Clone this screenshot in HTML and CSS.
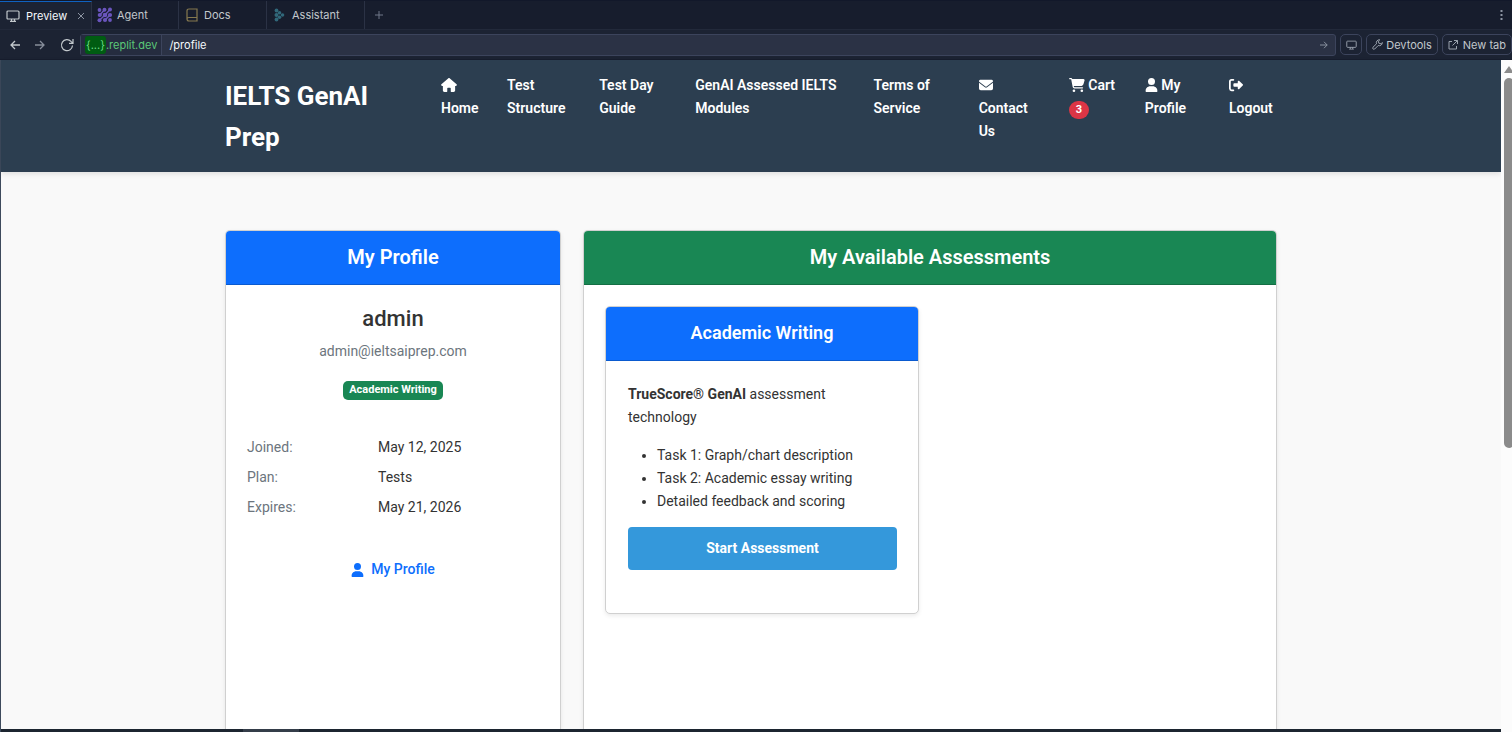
FILE: index.html
```html
<!DOCTYPE html>
<html lang="en">
<head>
<meta charset="utf-8">
<title>IELTS GenAI Prep - My Profile</title>
<link rel="stylesheet" href="styles.css">
</head>
<body>
<svg class="sprite" aria-hidden="true">
  <symbol id="monitor" viewBox="0 0 14 12"><path d="M2 1h10q1 0 1 1v6q0 1-1 1H2Q1 9 1 8V2q0-1 1-1zM5.500 9v2M8.500 9v2M4 11.400h6" fill="none" stroke="currentColor" stroke-width="1.200"/></symbol>
  <symbol id="user" viewBox="0 0 448 512"><path d="M224 256a128 128 0 1 0 0-256 128 128 0 1 0 0 256zm-46 48C80 304 0 384 0 482c0 17 13 30 30 30h388c17 0 30-13 30-30 0-98-80-178-178-178z" fill="currentColor"/></symbol>
</svg>

<div class="tabbar">
  <nav class="tabs" aria-label="Workspace tabs">
    <div class="tab tab-active">
      <svg class="tab-icon" viewBox="0 0 14 12"><use href="#monitor"/></svg>
      <span>Preview</span>
      <button class="plain tab-close" aria-label="Close tab"><svg width="8" height="8" viewBox="0 0 8 8"><path d="M1 1l6 6M7 1L1 7" stroke="currentColor"/></svg></button>
    </div>
    <a class="tab tab-agent" href="#">
      <svg width="16" height="16" viewBox="0 0 16 16" fill="#6a55bd"><circle cx="2.500" cy="3" r="1.900"/><circle cx="7.500" cy="2.800" r="2"/><circle cx="13" cy="2.500" r="2"/><circle cx="2.800" cy="8" r="2.100"/><circle cx="8" cy="8" r="2.300"/><circle cx="13" cy="8" r="2.100"/><circle cx="2.500" cy="13.300" r="2"/><circle cx="8" cy="13" r="2.100"/><circle cx="13" cy="13" r="1.900"/><path d="M2.800 8L7.500 2.800M8 8l5-5.500M2.500 13.300L8 8M8 13l5-5" stroke="#6a55bd" stroke-width="1.500"/></svg>
      <span>Agent</span>
    </a>
    <a class="tab tab-docs" href="#">
      <svg width="12" height="14" viewBox="0 0 12 14" fill="none" stroke="#85794f" stroke-width="1.200"><path d="M3 1h8v12H3q-2 0-2-2V3q0-2 2-2zM1 11q0-1.500 2-1.500h8"/></svg>
      <span>Docs</span>
    </a>
    <a class="tab tab-assistant" href="#">
      <svg width="11" height="14" viewBox="0 0 11 14" fill="#31687a"><circle cx="2.500" cy="2.500" r="1.900"/><circle cx="2.500" cy="7" r="2"/><circle cx="2.500" cy="11.500" r="1.900"/><circle cx="5.500" cy="4.700" r="1.800"/><circle cx="5.500" cy="9.300" r="1.800"/><circle cx="8.500" cy="7" r="1.800"/></svg>
      <span>Assistant</span>
    </a>
  </nav>
  <button class="plain tab-add" aria-label="New tab"><svg width="8" height="8" viewBox="0 0 8 8"><path d="M4 0v8M0 4h8" stroke="currentColor"/></svg></button>
  <button class="plain tab-more" aria-label="More options"><svg width="3" height="12" viewBox="0 0 3 12" fill="currentColor"><path d="M.5 1h2v2h-2zM.5 5h2v2h-2zM.5 9h2v2h-2z"/></svg></button>
</div>

<div class="toolbar">
  <div class="history">
    <button class="plain" aria-label="Back"><svg width="10" height="10" viewBox="0 0 10 10" fill="none" stroke="currentColor" stroke-width="1.300"><path d="M10 5H1M5 1L1 5l4 4"/></svg></button>
    <button class="plain dim" aria-label="Forward"><svg width="10" height="10" viewBox="0 0 10 10" fill="none" stroke="currentColor" stroke-width="1.300"><path d="M0 5h9M5 1l4 4-4 4"/></svg></button>
    <button class="plain" aria-label="Reload"><svg width="14" height="14" viewBox="0 0 14 14" fill="none" stroke="currentColor" stroke-width="1.200"><path d="M12.500 7.500A5.500 5.500 0 1 1 11 3.300L13 5.300M13 1v4.300H9"/></svg></button>
  </div>
  <form class="address">
    <span class="host"><span class="host-id">{...}</span>.replit.dev</span>
    <input class="path" type="text" value="/profile" aria-label="Path">
    <button class="plain go" type="button" aria-label="Go"><svg width="8" height="8" viewBox="0 0 10 10" fill="none" stroke="currentColor" stroke-width="1.200"><path d="M0 5h9M5 1l4 4-4 4"/></svg></button>
  </form>
  <button class="tool tool-square" aria-label="Device size"><svg width="11" height="10" viewBox="0 0 14 12"><use href="#monitor"/></svg></button>
  <button class="tool"><svg width="11" height="11" viewBox="0 0 11 11" fill="none" stroke="currentColor"><path d="M6.800 4.200L9 4.800l1.300-1.300A3 3 0 0 1 6.200 6.500L2.700 10Q1.800 10.600 1 9.900T1 8.200L4.500 4.800A3 3 0 0 1 7.800.8L6.400 2.200z"/></svg>Devtools</button>
  <button class="tool tool-last"><svg width="10" height="10" viewBox="0 0 10 10" fill="none" stroke="currentColor"><path d="M4 1.500H1v7.500h7.500V6M6 .5h3.500V4M9.500.5L4.500 5.500"/></svg>New tab</button>
</div>

<div class="viewport">
  <div class="page">
    <header class="site-header">
      <div class="container header-row">
        <a class="brand" href="#">IELTS GenAI Prep</a>
        <nav class="site-nav" aria-label="Main">
          <a href="#"><svg class="icon-wide" viewBox="0 0 576 512" fill="currentColor"><path d="M576 256c0 18-15 32-32 32h-32v170c0 30-24 54-54 54h-90c-9 0-16-7-16-16V376c0-13-11-24-24-24h-80c-13 0-24 11-24 24v120c0 9-7 16-16 16h-90c-30 0-54-24-54-54V288H32c-18 0-32-14-32-32 0-9 3-17 10-24L266 8c14-12 31-12 44 0l255 224c7 7 11 15 11 24z"/></svg> Home</a>
          <a href="#">Test Structure</a>
          <a href="#">Test Day Guide</a>
          <a href="#">GenAI Assessed IELTS Modules</a>
          <a href="#">Terms of Service</a>
          <a href="#"><svg class="icon" viewBox="0 0 512 512" fill="currentColor"><path d="M48 64a48 48 0 0 0-29 86l218 164q19 14 38 0l218-164a48 48 0 0 0-29-86zM0 176v208q0 64 64 64h384q64 0 64-64V176L294 339q-38 28-76 0z"/></svg> Contact Us</a>
          <a href="#"><svg class="icon-wide" viewBox="0 0 576 512" fill="currentColor"><path d="M0 24Q0 0 24 0h46q32 0 46 32h411q43 5 39 46l-43 152q-15 52-68 58H171l6 32q3 16 22 16h289q24 0 24 24t-24 24H199q-60-3-70-55L77 57q-1-9-8-9H24Q0 48 0 24z"/><circle cx="176" cy="464" r="48"/><circle cx="464" cy="464" r="48"/></svg> Cart <span class="count">3</span></a>
          <a href="#"><svg class="icon-user" viewBox="0 0 448 512"><use href="#user"/></svg> My Profile</a>
          <a href="#"><svg class="icon" viewBox="0 0 512 512" fill="currentColor"><path d="M160 96q32 0 32-32t-32-32H96Q0 38 0 128v256q6 90 96 96h64q32 0 32-32t-32-32H96q-32 0-32-32V128q0-32 32-32zM502 278q20-22 0-45L366 105q-34-20-46 23v64H192q-32 3-32 32v64q3 29 32 32h128v64q12 43 46 23z"/></svg> Logout</a>
        </nav>
      </div>
    </header>

    <main class="container columns">
      <section class="card">
        <h2 class="card-header blue">My Profile</h2>
        <div class="card-body profile">
          <h3 class="username">admin</h3>
          <p class="email">admin@ieltsaiprep.com</p>
          <span class="badge">Academic Writing</span>
          <dl class="facts">
            <dt>Joined:</dt><dd>May 12, 2025</dd>
            <dt>Plan:</dt><dd>Tests</dd>
            <dt>Expires:</dt><dd>May 21, 2026</dd>
          </dl>
          <a class="profile-link" href="#"><svg class="icon-user" viewBox="0 0 448 512"><use href="#user"/></svg>My Profile</a>
        </div>
      </section>

      <section class="card">
        <h2 class="card-header green">My Available Assessments</h2>
        <div class="card-body assessments">
          <article class="card">
            <h3 class="card-header card-header-small blue">Academic Writing</h3>
            <div class="card-body assessment">
              <p><strong>TrueScore® GenAI</strong> assessment technology</p>
              <ul>
                <li>Task 1: Graph/chart description</li>
                <li>Task 2: Academic essay writing</li>
                <li>Detailed feedback and scoring</li>
              </ul>
              <button class="start">Start Assessment</button>
            </div>
          </article>
        </div>
      </section>
    </main>
    <div class="bottom-strip"><div class="bottom-handle"></div></div>
  </div>
  <div class="scrollbar" aria-hidden="true">
    <div class="scroll-arrow"></div>
    <div class="scroll-thumb"></div>
  </div>
</div>
</body>
</html>
```
FILE: styles.css
```css
* { box-sizing: border-box; }

body {
  margin: 0;
  height: 100vh;
  display: flex;
  flex-direction: column;
  overflow: hidden;
  background: #1c2333;
  color: #333;
  font: 14px/23px Roboto, "Liberation Sans", sans-serif;
}

h2, h3, p, ul, dl, dd { margin: 0; }
a { color: inherit; text-decoration: none; }
svg { display: block; flex: none; }
.sprite { display: none; }

.plain {
  display: flex;
  align-items: center;
  justify-content: center;
  padding: 0;
  border: 0;
  background: none;
  color: inherit;
}

/* Workspace chrome */
.tabbar, .toolbar {
  display: flex;
  flex: none;
  align-items: center;
  color: #c2c8cc;
  font: 11px/16px Inter, sans-serif;
}

.tabbar {
  height: 30px;
  background: #171d2d;
  border-top: 1px solid #12182a;
  border-bottom: 1px solid #22293a;
}

.tabs { display: flex; align-self: stretch; }

.tab {
  display: flex;
  align-items: center;
  gap: 6px;
  padding: 0 6px;
  border-right: 1px solid #2b3245;
}

.tab-active {
  width: 92px;
  background: #1c2333;
  border-top: 1px solid #0f62c0;
  color: #f5f9fc;
}

.tab-icon { width: 14px; height: 12px; color: #c2c8cc; }
.tab-close { margin-left: auto; color: #8d95a3; }
.tab-agent { width: 87px; padding-left: 5px; gap: 4px; }
.tab-docs { width: 88px; padding-left: 7px; }
.tab-assistant { width: 98px; padding-left: 7px; gap: 7px; }
.tab-add { width: 28px; height: 28px; color: #71798a; }
.tab-more { width: 22px; height: 28px; margin-left: auto; color: #8d95a3; }

.toolbar { height: 30px; gap: 4px; border-bottom: 1px solid #171d2d; }
.history { display: flex; align-items: center; gap: 15px; width: 76px; padding-left: 10px; }
.history .dim { color: #878e9b; }

.address {
  display: flex;
  flex: 1;
  height: 22px;
  background: #2b3245;
  border: 1px solid #3c445c;
  border-radius: 3px;
}

.host {
  padding: 2px 4px 0 4px;
  background: #252c3f;
  border-right: 1px solid #3c445c;
  color: #5bc878;
}

.host-id { padding: 2px 1px; border-radius: 3px; background: #005c12; color: #6ad987; }

.path {
  flex: 1;
  min-width: 0;
  padding: 0 7px;
  border: 0;
  background: none;
  color: #f5f9fc;
  font: inherit;
}

.go { width: 22px; color: #8d95a3; }

.tool {
  display: flex;
  align-items: center;
  justify-content: center;
  gap: 3px;
  height: 21px;
  padding: 0 5px;
  border: 1px solid #3c445c;
  border-radius: 5px;
  background: #1c2333;
  color: #c2c8cc;
  font: inherit;
}

.tool-square { width: 22px; padding: 0; }
.tool svg { color: #9ba3ae; }
.tool-last { gap: 5px; }

/* Previewed page */
.viewport { display: flex; flex: 1; min-height: 0; border-left: 1px solid #3d4a5c; }

.page {
  display: flex;
  flex: 1;
  flex-direction: column;
  min-width: 0;
  background: #f9f9f9;
}

.container { width: 100%; max-width: 1082px; margin: 0 auto; padding: 0 15px; }

.site-header {
  flex: none;
  background: #2c3e50;
  box-shadow: 0 2px 5px rgba(0, 0, 0, .1);
  color: #fff;
}

.header-row {
  display: grid;
  grid-template-columns: 168px 1fr;
  gap: 48px;
  padding-top: 14px;
  padding-bottom: 14px;
}

.brand { padding-top: 2px; font-size: 26px; font-weight: 700; line-height: 41px; }

.site-nav {
  display: grid;
  grid-template-columns: 42fr 68fr 72fr 154fr 81fr 66fr 52fr 60fr 48fr;
  gap: 24px;
  align-items: start;
  font-weight: 600;
}

.site-nav svg { display: inline-block; vertical-align: -2px; }
.icon { width: 14px; height: 14px; }
.icon-wide { width: 16px; height: 14px; }
.icon-user { width: 13px; height: 14px; }

.count {
  display: inline-block;
  padding: 3px 7px 4px;
  border-radius: 9px;
  background: #dc3545;
  font-size: 11px;
  font-weight: 700;
  line-height: 11px;
}

.columns {
  display: grid;
  grid-template-columns: 336fr 694fr;
  flex: 1;
  gap: 22px;
  min-height: 0;
  padding-top: 58px;
}

.card {
  border: 1px solid #d0d0d0;
  border-radius: 5px;
  background: #fff;
  box-shadow: 0 2px 4px rgba(0, 0, 0, .08);
}

.columns > .card { border-bottom: 0; border-radius: 5px 5px 0 0; }

.card-header {
  padding: 14px 21px 15px;
  border-bottom: 1px solid rgba(0, 0, 0, .18);
  border-radius: 4px 4px 0 0;
  color: #fff;
  font-size: 20px;
  font-weight: 600;
  line-height: 24px;
  text-align: center;
}

.card-header-small { font-size: 18px; }
.blue { background-color: #0d6efd; }
.green { background-color: #198754; }

.profile {
  display: flex;
  flex-direction: column;
  align-items: center;
  padding: 21px;
}

.username { font-size: 22px; font-weight: 500; line-height: 26px; }
.email { margin-top: 8px; color: #6c757d; }

.badge {
  margin-top: 18px;
  padding: 3px 6px 5px;
  border-radius: 5px;
  background: #198754;
  color: #fff;
  font-size: 11px;
  font-weight: 700;
  line-height: 11px;
}

.facts {
  display: grid;
  grid-template-columns: 131fr 161fr;
  row-gap: 7px;
  width: 100%;
  margin-top: 36px;
}

.facts dt { color: #6c757d; }

.profile-link {
  display: flex;
  align-items: center;
  gap: 7px;
  margin-top: 39px;
  color: #0d6efd;
  font-weight: 500;
}

.assessments {
  display: grid;
  grid-template-columns: 1fr 1fr;
  gap: 22px;
  padding: 21px;
}

.assessment { padding: 22px 21px 43px 22px; }
.assessment ul { margin: 15px 0 14px; padding-left: 29px; }

.start {
  display: block;
  width: 100%;
  padding: 10px;
  border: 0;
  border-radius: 4px;
  background: #3498db;
  color: #fff;
  font: inherit;
  font-weight: 700;
}

.bottom-strip { z-index: 1; flex: none; height: 3px; padding-left: 242px; background: #1c2530; }
.bottom-handle { width: 56px; height: 3px; background: #343d49; }

.scrollbar { width: 11px; flex: none; padding: 6px 0 0 3px; overflow: hidden; background: #fcfcfc; }

.scroll-arrow {
  width: 0;
  border: 5px solid transparent;
  border-top: 0;
  border-bottom: 7px solid #8b8b8b;
}

.scroll-thumb { width: 10px; height: 55.5%; margin-top: 5px; border-radius: 5px; background: #8b8b8b; }
```
